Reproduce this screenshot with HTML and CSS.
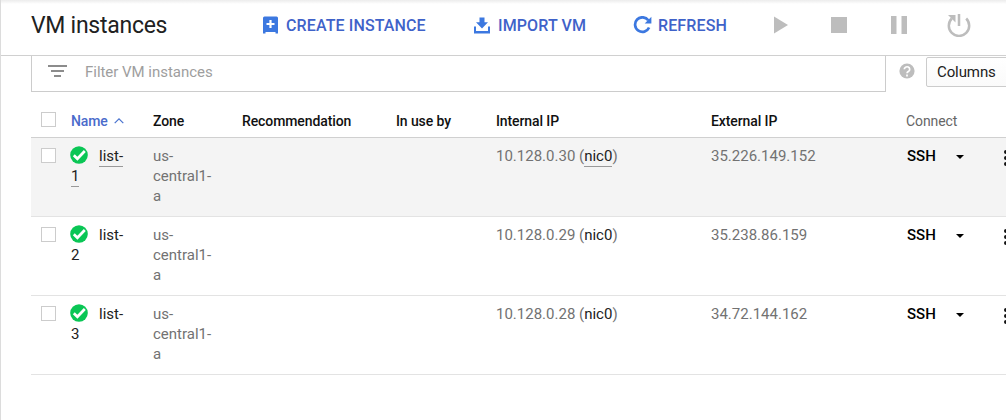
FILE: index.html
```html
<!DOCTYPE html>
<html lang="en">
<head>
<meta charset="utf-8">
<title>VM instances</title>
<link rel="stylesheet" href="styles.css">
</head>
<body>
<svg class="defs" width="0" height="0">
  <symbol id="ok" viewBox="0 0 18 18"><circle cx="9" cy="9" r="8.8" fill="#0ac655"/><path d="M3.800 9.200l3.600 3.600L14.800 5" fill="none" stroke="#fff" stroke-width="2.700"/></symbol>
  <symbol id="dots" viewBox="0 0 4 18"><circle cx="2" cy="3" r="2"/><circle cx="2" cy="9" r="2"/><circle cx="2" cy="15" r="2"/></symbol>
</svg>
<div class="page">
  <header class="toolbar">
    <h1 class="title">VM instances</h1>
    <button class="action create"><svg width="15" height="18" viewBox="0 0 15 18"><path fill="#3c78e0" fill-rule="evenodd" d="M1.500 .5h12q1.500 0 1.500 1.500V17.500h-2.500V16H2.500v1.500H0V2q0-1.500 1.500-1.500zM6.400 4v2.900H3.500v2.200h2.900V12h2.200V9.100h2.900V6.900H8.600V4z"/></svg><span>CREATE INSTANCE</span></button>
    <button class="action import"><svg width="16" height="17" viewBox="0 0 16 17"><path fill="#3c78e0" d="M5.500 .5h5v4.700h3.500L8 11.500 2 5.200h3.500zM0 9.500h2v4.500h12V9.500h2V16.500H0z"/></svg><span>IMPORT VM</span></button>
    <button class="action refresh"><svg width="19" height="18" viewBox="0 0 19 18"><path d="M15.300 4.300A7.300 7.300 0 1 0 16.100 11.500" fill="none" stroke="#3c78e0" stroke-width="2.700"/><path d="M18.400 .8v6.700h-6.700z" fill="#3c78e0"/></svg><span>REFRESH</span></button>
    <div class="controls">
      <svg class="play" width="14" height="18" viewBox="0 0 14 18"><path d="M0 .5l14 8.500-14 8.500z"/></svg>
      <svg class="stop" width="16" height="16"><path d="M0 0h16v16H0z"/></svg>
      <svg class="pause" width="16" height="18"><path d="M0 0h5.500v18H0zM10.500 0H16v18h-5.500z"/></svg>
      <svg class="power" width="24" height="24" viewBox="0 0 24 24"><path d="M4.800 5.500A10.200 10.200 0 1 0 19.200 5.500M12 1v12" fill="none" stroke="#bdbdbd" stroke-width="2.500"/><path d="M1 2h7.500v7.500z"/></svg>
    </div>
  </header>
  <div class="filters">
    <div class="filter"><svg width="19" height="12"><path fill="#8c8c8c" d="M0 0h19v2H0zM3 5h13v2H3zM6 10h7v2H6z"/></svg><span>Filter VM instances</span></div>
    <svg class="help" width="16" height="16" viewBox="0 0 16 16"><circle cx="8" cy="8" r="7.600" fill="#bdbdbd"/><path d="M5.300 6.300a2.700 2.500 0 1 1 4.300 2Q8 9.300 8 10.300M8 11.500v1.900" fill="none" stroke="#fff" stroke-width="1.700"/></svg>
    <button class="columns">Columns</button>
  </div>
  <div class="table">
    <div class="row head">
      <i class="check"></i>
      <div class="sorted">Name<svg width="10" height="6"><path d="M.7 5.200L5 .9l4.300 4.300" fill="none" stroke="#4a73cf" stroke-width="1.200"/></svg></div>
      <div>Zone</div><div>Recommendation</div><div>In use by</div><div>Internal IP</div><div>External IP</div><div class="muted">Connect</div>
    </div>
    <div class="row hovered">
      <i class="check"></i>
      <div class="name"><svg class="ok"><use href="#ok"/></svg><span>list-<br>1</span></div>
      <div>us-<br>central1-<br>a</div><div></div><div></div>
      <div>10.128.0.30 (<span class="nic">nic0</span>)</div><div>35.226.149.152</div>
      <div class="connect"><b>SSH</b><i class="caret"></i><svg class="dots"><use href="#dots"/></svg></div>
    </div>
    <div class="row">
      <i class="check"></i>
      <div class="name"><svg class="ok"><use href="#ok"/></svg><span>list-<br>2</span></div>
      <div>us-<br>central1-<br>a</div><div></div><div></div>
      <div>10.128.0.29 (<span class="nic">nic0</span>)</div><div>35.238.86.159</div>
      <div class="connect"><b>SSH</b><i class="caret"></i><svg class="dots"><use href="#dots"/></svg></div>
    </div>
    <div class="row">
      <i class="check"></i>
      <div class="name"><svg class="ok"><use href="#ok"/></svg><span>list-<br>3</span></div>
      <div>us-<br>central1-<br>a</div><div></div><div></div>
      <div>10.128.0.28 (<span class="nic">nic0</span>)</div><div>34.72.144.162</div>
      <div class="connect"><b>SSH</b><i class="caret"></i><svg class="dots"><use href="#dots"/></svg></div>
    </div>
  </div>
</div>
</body>
</html>
```
FILE: styles.css
```css
* { box-sizing: border-box; }
body { margin: 0; overflow: hidden; background: #fff; font-family: Roboto, sans-serif; color: #212121; }
svg { display: block; flex: none; }
button { font: inherit; background: none; border: 0; padding: 0; }
.defs { display: none; }
.page { width: 1006px; height: 420px; overflow: hidden; border-left: 1px solid #dcdcdc; }
.toolbar { height: 56px; display: flex; align-items: center; padding: 0 0 5px 30px; border-bottom: 1px solid #d0d0d0; background: linear-gradient(#ececec, #fff 4px); }
.title { margin: 0; padding-top: 2px; width: 232px; font-size: 23px; font-weight: 400; line-height: 28px; letter-spacing: -.27px; white-space: nowrap; }
.action { display: flex; align-items: center; gap: 8px; color: #3f62c9; font-size: 16px; font-weight: 500; line-height: 20px; letter-spacing: .12px; white-space: nowrap; }
.action span { padding-top: 2px; }
.create { width: 211px; }
.import { width: 159px; }
.refresh { width: 141px; gap: 6px; }
.controls { display: flex; align-items: center; fill: #bdbdbd; }
.stop { margin-left: 43px; }
.pause { margin-left: 44px; }
.power { margin-left: 40px; }
.filters { display: flex; height: 36px; padding-left: 30px; }
.filter { width: 855px; height: 36px; flex: none; display: flex; align-items: center; gap: 18px; padding: 0 0 4px 16px; border: 1px solid #ccc; border-top: 0; color: #9e9e9e; font-size: 15px; letter-spacing: -.03px; }
.filter svg { margin-top: -1px; }
.help { margin: 7px 11px 0 13px; }
.columns { flex: none; width: 100px; height: 30px; margin-top: 1px; padding-left: 10px; text-align: left; border: 1px solid #ccc; border-radius: 2px; background: linear-gradient(#fff, #fafafa); font-size: 15px; letter-spacing: -.1px; color: #212121; }
.table { margin-left: 30px; }
.row { display: grid; grid-template-columns: 40px 82px 89px 154px 100px 215px 195px 100px; height: 79px; padding-top: 8px; border-bottom: 1px solid #e3e3e3; font-size: 15px; line-height: 20px; color: #727272; white-space: nowrap; }
.head { height: 46px; padding-top: 19px; border-color: #d0d0d0; font-size: 14px; font-weight: 500; letter-spacing: -.1px; color: #111; }
.hovered { background: #f4f4f4; }
.check { width: 15px; height: 15px; margin: 2px 0 0 10px; border: 1px solid #ccc; background: #fff; }
.head .check { margin-top: 1px; }
.sorted { display: flex; align-items: center; height: 20px; gap: 6px; color: #4a6bcb; }
.muted { color: #666; font-weight: 400; }
.name { color: #212121; }
.ok { display: inline-block; width: 18px; height: 18px; margin: 0 11px 0 -1px; vertical-align: top; }
.nic { color: #212121; }
.hovered .name span, .hovered .nic { padding-bottom: 1px; border-bottom: 1px solid #999; }
.connect { display: flex; height: 20px; align-items: center; color: #000; }
.connect b { flex: none; width: 50px; padding-left: 1px; font-weight: 500; }
.caret { flex: none; border: 4px solid transparent; border-top-color: #000; border-bottom: 0; margin-top: 1px; }
.dots { width: 4px; height: 18px; margin: 3px 0 0 40px; fill: #111; }
```
